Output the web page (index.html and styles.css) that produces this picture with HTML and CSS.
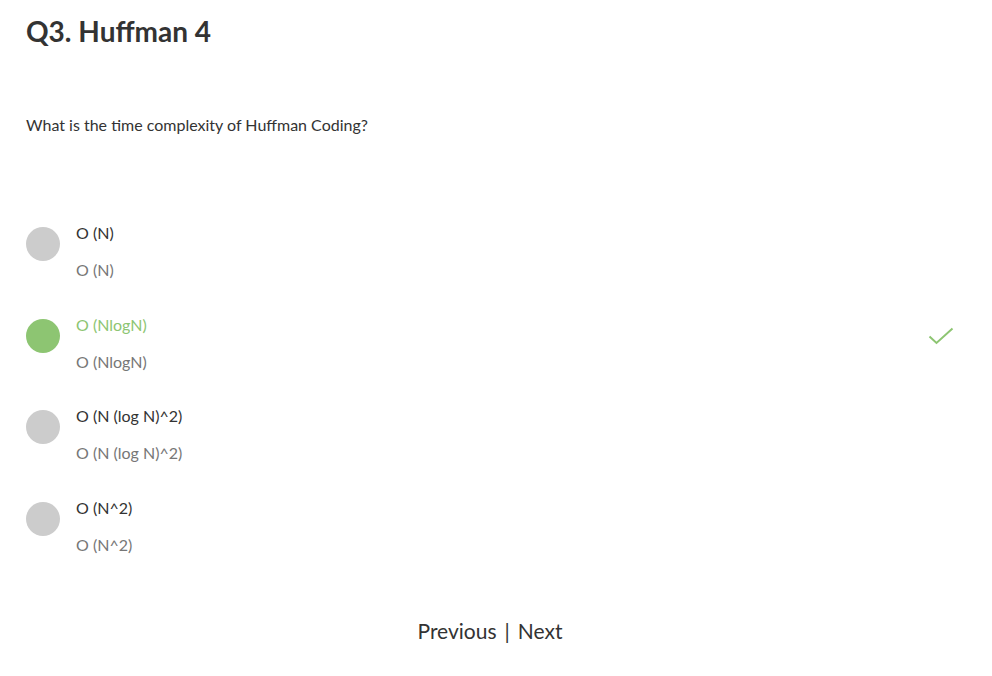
FILE: index.html
```html
<!DOCTYPE html>
<html>
<head>
<meta charset="utf-8">
<link rel="stylesheet" href="styles.css">
</head>
<body>
<div class="page">
  <h1 class="title">Q3. Huffman 4</h1>
  <p class="question">What is the time complexity of Huffman Coding?</p>
  <div class="options">
    <div class="option">
      <span class="dot"></span>
      <div class="texts">
        <div class="primary">O (N)</div>
        <div class="secondary">O (N)</div>
      </div>
    </div>
    <div class="option correct">
      <span class="dot"></span>
      <div class="texts">
        <div class="primary">O (NlogN)</div>
        <div class="secondary">O (NlogN)</div>
      </div>
      <svg class="check" width="26" height="18" viewBox="0 0 26 18"><path d="M1.5 9.5 L8.5 16 L24.5 1.5" fill="none" stroke="#8dc572" stroke-width="2"/></svg>
    </div>
    <div class="option">
      <span class="dot"></span>
      <div class="texts">
        <div class="primary">O (N (log N)^2)</div>
        <div class="secondary">O (N (log N)^2)</div>
      </div>
    </div>
    <div class="option">
      <span class="dot"></span>
      <div class="texts">
        <div class="primary">O (N^2)</div>
        <div class="secondary">O (N^2)</div>
      </div>
    </div>
  </div>
  <div class="nav">
    <span class="link">Previous</span>
    <span class="sep">|</span>
    <span class="link">Next</span>
  </div>
</div>
</body>
</html>
```
FILE: styles.css
```css
html, body {
  margin: 0;
  padding: 0;
  background: #ffffff;
}
body {
  font-family: "Lato", "Open Sans", sans-serif;
  color: #333333;
}
.page {
  padding: 14px 38px 0 26px;
}
.title {
  margin: 0;
  font-size: 28px;
  line-height: 34px;
  font-weight: 700;
  color: #333333;
}
.question {
  margin: 67px 0 0 0;
  font-size: 16px;
  line-height: 20px;
  color: #333333;
}
.options {
  margin-top: 88px;
  display: flex;
  flex-direction: column;
  gap: 34.5px;
}
.option {
  display: flex;
  align-items: flex-start;
  gap: 16px;
}
.dot {
  width: 34px;
  height: 34px;
  margin-top: 4px;
  border-radius: 50%;
  background: #cccccc;
  flex: none;
}
.correct .dot {
  background: #8dc572;
}
.texts {
  flex: 1;
  display: flex;
  flex-direction: column;
  gap: 17px;
  font-size: 16px;
  line-height: 20px;
}
.primary {
  color: #333333;
}
.correct .primary {
  color: #8dc572;
}
.secondary {
  color: #777777;
}
.check {
  flex: none;
  margin-top: 12px;
}
.nav {
  margin-top: 63px;
  display: flex;
  justify-content: center;
  gap: 8px;
  font-size: 21px;
  line-height: 26px;
  color: #333333;
}
```
